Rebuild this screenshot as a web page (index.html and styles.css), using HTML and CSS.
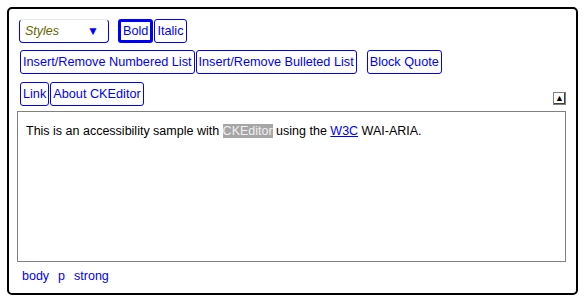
FILE: index.html
```html
<html>
<head>
<title>Accessibility sample</title>
<link rel="stylesheet" href="styles.css">
</head>
<body>
<div class="editor">
 <div class="toolbar">
  <div class="row">
   <span class="combo"><span class="combo-text">Styles</span><span class="combo-arrow">&#9660;</span></span>
   <span class="group">
    <a href="#" class="btn on">Bold</a><a href="#" class="btn">Italic</a>
   </span>
  </div>
  <div class="row wide">
   <span class="group">
    <a href="#" class="btn">Insert/Remove Numbered List</a><a href="#" class="btn">Insert/Remove Bulleted List</a>
   </span>
   <span class="group">
    <a href="#" class="btn">Block Quote</a>
   </span>
  </div>
  <div class="row last">
   <span class="group">
    <a href="#" class="btn">Link</a><a href="#" class="btn">About CKEditor</a>
   </span>
   <a href="#" class="collapse">&#9650;</a>
  </div>
 </div>
 <div class="content">
  This is an accessibility sample with <strong class="sel">CKEditor</strong> using the <a href="#" class="w3c">W3C</a> WAI-ARIA.
 </div>
 <div class="path">
  <a href="#">body</a><a href="#">p</a><a href="#">strong</a>
 </div>
</div>
</body>
</html>
```

FILE: styles.css
```css
body {margin:0; padding:7px; background:#fff; font-family:"Liberation Sans",Arial,sans-serif; font-size:12px;}
.editor {width:571px; height:288px; border:2px solid #000; border-radius:5px; box-sizing:border-box; padding:10px 10px 0 8px;}
.toolbar {display:flex; flex-direction:column; gap:7px; padding:0 0 0 3px;}
.row {display:flex; align-items:center; gap:9px; height:24px;}
.row.wide {gap:10px;}
.row.last {justify-content:space-between; margin-top:1px;}
.group {display:flex; gap:1px;}
.combo {display:flex; justify-content:space-between; align-items:center; width:90px; height:24px; border:1px solid #00f; border-top-color:#e8e8f4; border-radius:4px; padding:0 9px 0 5px; box-sizing:border-box; margin-left:-1px;}
.combo-text {font-style:italic; color:#666600; font-size:12.5px;}
.combo-arrow {color:#00f; font-size:12px;}
.btn {display:block; height:24px; line-height:22px; box-sizing:border-box; border:1px solid #00f; border-radius:3px; padding:0 2px; color:#00f; text-decoration:none; font-size:12.7px;}
.btn.on {border:3px solid #00f; line-height:18px; padding:0 2px;}
.collapse {display:block; width:13px; height:13px; box-sizing:border-box; border:1px solid #808080; box-shadow:inset -1px -1px 0 #404040; color:#000; font-size:9px; line-height:11px; text-align:center; text-decoration:none; margin-top:9px;}
.content {height:151px; margin-top:5px; border:1px solid #808080; box-sizing:border-box; padding:12px 8px; color:#000; font-size:12.5px;}
.sel {background:#a6a6a6; color:#f0f0f0; font-weight:normal;}
.w3c {color:#00f; text-decoration:underline;}
.path {display:flex; gap:9px; padding:7px 5px; }
.path a {color:#00f; text-decoration:none; font-size:12.5px;}
```
